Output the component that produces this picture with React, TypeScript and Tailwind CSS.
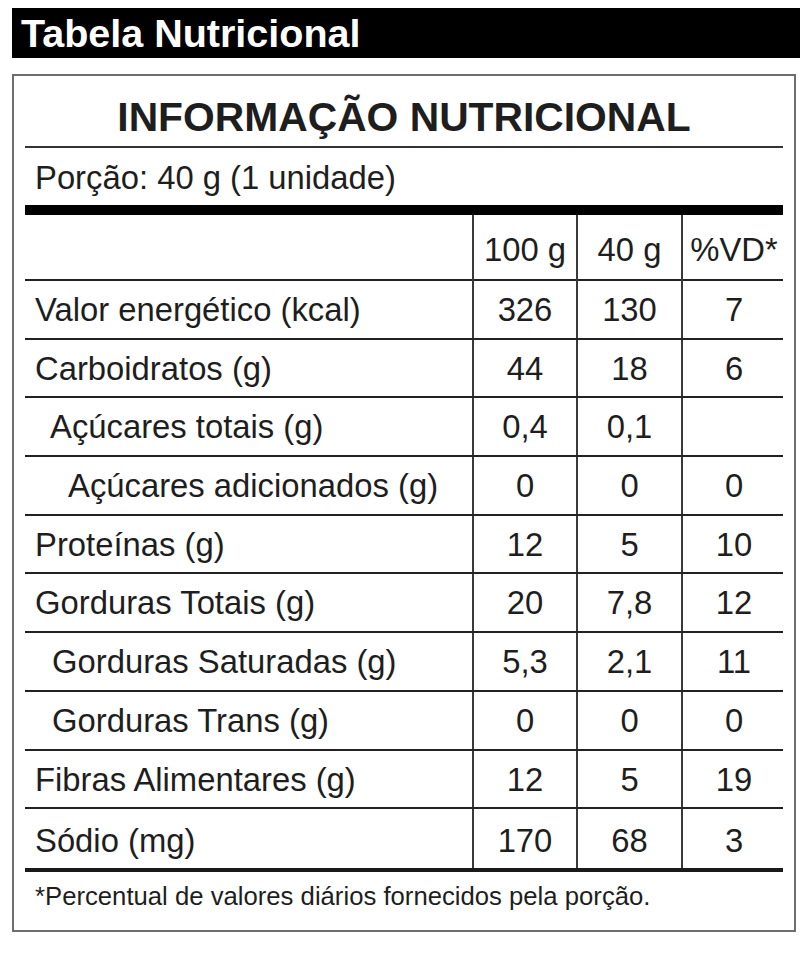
import React from 'react';

type Row = {
    label: string;
    indent: string;
    per100: string;
    perPortion: string;
    vd: string;
};

const rows: Row[] = [
    { label: 'Valor energético (kcal)', indent: 'pl-[10px]', per100: '326', perPortion: '130', vd: '7' },
    { label: 'Carboidratos (g)', indent: 'pl-[10px]', per100: '44', perPortion: '18', vd: '6' },
    { label: 'Açúcares totais (g)', indent: 'pl-[25px]', per100: '0,4', perPortion: '0,1', vd: '' },
    { label: 'Açúcares adicionados (g)', indent: 'pl-[43px]', per100: '0', perPortion: '0', vd: '0' },
    { label: 'Proteínas (g)', indent: 'pl-[10px]', per100: '12', perPortion: '5', vd: '10' },
    { label: 'Gorduras Totais (g)', indent: 'pl-[10px]', per100: '20', perPortion: '7,8', vd: '12' },
    { label: 'Gorduras Saturadas (g)', indent: 'pl-[27px]', per100: '5,3', perPortion: '2,1', vd: '11' },
    { label: 'Gorduras Trans (g)', indent: 'pl-[27px]', per100: '0', perPortion: '0', vd: '0' },
    { label: 'Fibras Alimentares (g)', indent: 'pl-[10px]', per100: '12', perPortion: '5', vd: '19' },
    { label: 'Sódio (mg)', indent: 'pl-[10px]', per100: '170', perPortion: '68', vd: '3' },
];

const grid = 'grid grid-cols-[447px_104px_105px_104px]';
const numCell = 'border-l-2 border-[#3a3a3a] text-center';

export default function App() {
    return (
        <div className="w-[800px] h-[962px] bg-white text-[#1e1e1e] font-['Liberation_Sans',Arial,sans-serif] pt-[8px]">
            <div className="ml-[12px] w-[788px] h-[50px] bg-black text-white font-bold text-[39.5px] leading-[50px] pl-[9px]">
                Tabela Nutricional
            </div>

            <div className="mt-[16px] ml-[12px] w-[784px] h-[858px] border-2 border-[#6e6e6e] px-[11px]">
                <div className="h-[72px] border-b-2 border-[#333] text-center font-bold text-[40.8px] leading-[40px] pt-[21px] whitespace-nowrap">
                    INFORMAÇÃO NUTRICIONAL
                </div>
                <div className="h-[57px] pl-[10px] pt-[3px] text-[32.8px] leading-[54px]">
                    Porção: 40 g (1 unidade)
                </div>
                <div className="h-[10px] bg-black" />

                <div className={`${grid} h-[66px] border-b-2 border-[#222] text-[32.8px] leading-[64px]`}>
                    <div className="pt-[3px]" />
                    <div className={`${numCell} pt-[3px]`}>100 g</div>
                    <div className={`${numCell} pt-[3px]`}>40 g</div>
                    <div className={`${numCell} pt-[3px]`}>%VD*</div>
                </div>

                {rows.map((r, i) => {
                    const last = i === rows.length - 1;
                    const pad = last ? 'pt-[5px]' : 'pt-[2px]';
                    return (
                        <div
                            key={r.label}
                            className={`${grid} text-[32.8px] ${
                                last
                                    ? 'h-[62.4px] border-b-4 border-[#1a1a1a] leading-[53px]'
                                    : 'h-[58.7px] border-b-2 border-[#222] leading-[54.7px]'
                            }`}
                        >
                            <div className={`${r.indent} ${pad} whitespace-nowrap`}>{r.label}</div>
                            <div className={`${numCell} ${pad}`}>{r.per100}</div>
                            <div className={`${numCell} ${pad}`}>{r.perPortion}</div>
                            <div className={`${numCell} ${pad}`}>{r.vd}</div>
                        </div>
                    );
                })}

                <div className="h-[58px] pl-[10px] text-[25.7px] leading-[48px] whitespace-nowrap">
                    *Percentual de valores diários fornecidos pela porção.
                </div>
            </div>
        </div>
    );
}
